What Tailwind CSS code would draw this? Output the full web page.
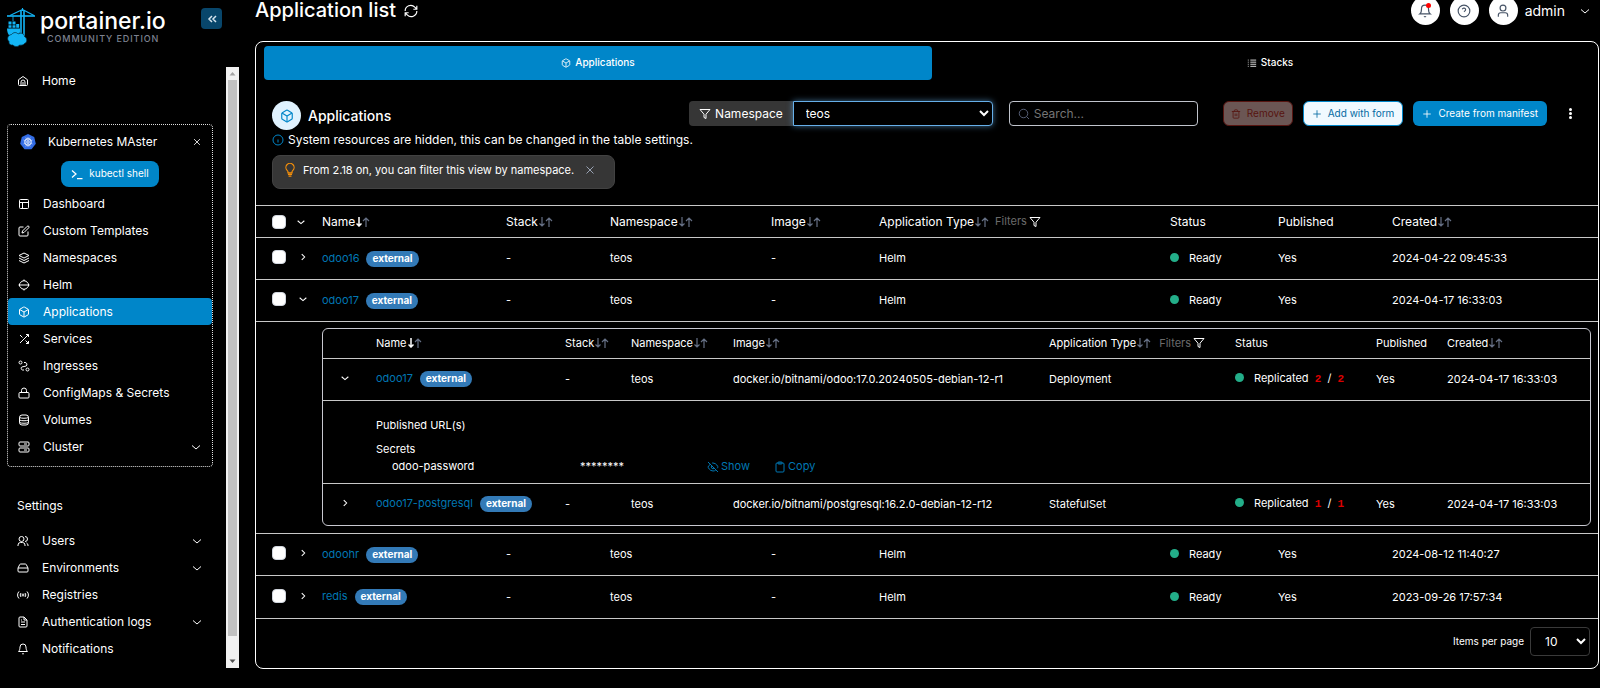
<!DOCTYPE html>
<html lang="en">
<head>
<meta charset="utf-8">
<title>Application list</title>
<script src="https://cdn.jsdelivr.net/npm/@tailwindcss/browser@4"></script>
</head>
<body class="bg-black text-white font-['Inter',sans-serif] text-xs overflow-x-hidden">

<svg class="hidden" xmlns="http://www.w3.org/2000/svg">
  <defs>
    <symbol id="home" viewBox="0 0 24 24"><path d="M8 21v-7a4 4 0 0 1 8 0v7M12 14v7"/><path d="M3 9.5 12 3l9 6.500V19a2 2 0 0 1-2 2H5a2 2 0 0 1-2-2z"/></symbol>
    <symbol id="layout" viewBox="0 0 24 24"><rect x="3" y="3" width="18" height="18" rx="2"/><path d="M3 9h18M9 21V9"/></symbol>
    <symbol id="edit" viewBox="0 0 24 24"><path d="M11 4H4a2 2 0 0 0-2 2v14a2 2 0 0 0 2 2h14a2 2 0 0 0 2-2v-7"/><path d="M18.500 2.500a2.120 2.120 0 0 1 3 3L12 15l-4 1 1-4z"/></symbol>
    <symbol id="layers" viewBox="0 0 24 24"><path d="m12 2 10 5-10 5L2 7z"/><path d="m2 12 10 5 10-5M2 17l10 5 10-5"/></symbol>
    <symbol id="helm" viewBox="0 0 24 24"><path d="M4 9a8.500 8.500 0 0 1 16 0M4 15a8.500 8.500 0 0 0 16 0M1 12h22M12 4V1M12 23v-3M3 9v6M21 9v6"/></symbol>
    <symbol id="box" viewBox="0 0 24 24"><path d="M21 8a2 2 0 0 0-1-1.730l-7-4a2 2 0 0 0-2 0l-7 4A2 2 0 0 0 3 8v8a2 2 0 0 0 1 1.730l7 4a2 2 0 0 0 2 0l7-4A2 2 0 0 0 21 16Z"/><path d="m3.300 7 8.700 5 8.700-5M12 22V12"/></symbol>
    <symbol id="shuffle" viewBox="0 0 24 24"><path d="M16 3h5v5M4 20 21 3M21 16v5h-5M15 15l6 6M4 4l5 5"/></symbol>
    <symbol id="route" viewBox="0 0 24 24"><circle cx="5" cy="5" r="3"/><circle cx="19" cy="19" r="3"/><path d="M12 5h2a4 4 0 0 1 2.500 7l-9 2A3.500 3.500 0 0 0 9 20h3"/></symbol>
    <symbol id="lock" viewBox="0 0 24 24"><rect x="2" y="11" width="20" height="11" rx="2"/><path d="M7 11V7a5 5 0 0 1 10 0v4"/></symbol>
    <symbol id="database" viewBox="0 0 24 24"><rect x="3" y="2" width="18" height="20" rx="5"/><path d="M3 7c3 2 15 2 18 0M3 12c3 2 15 2 18 0M3 17c3 2 15 2 18 0"/></symbol>
    <symbol id="server" viewBox="0 0 24 24"><rect x="2" y="2" width="20" height="8" rx="2"/><rect x="2" y="14" width="20" height="8" rx="2"/><path d="M6 6h.01M6 18h.01M12 6h6M12 18h6"/></symbol>
    <symbol id="users" viewBox="0 0 24 24"><circle cx="9" cy="8" r="5"/><path d="M2 22v-2a5 5 0 0 1 5-5h4a5 5 0 0 1 5 5v2M16 3a5 5 0 0 1 0 10M19 16a5 5 0 0 1 3 4v2"/></symbol>
    <symbol id="drive" viewBox="0 0 24 24"><path d="M22 12H2M5.450 5.110 2 12v6a2 2 0 0 0 2 2h16a2 2 0 0 0 2-2v-6l-3.450-6.890A2 2 0 0 0 16.760 4H7.240a2 2 0 0 0-1.790 1.110zM6 16h.01M10 16h.01"/></symbol>
    <symbol id="radio" viewBox="0 0 24 24"><path d="M4 19a10 10 0 0 1 0-14M8 16a6 6 0 0 1 0-8M16 8a6 6 0 0 1 0 8M20 5a10 10 0 0 1 0 14"/><circle cx="12" cy="12" r="2"/></symbol>
    <symbol id="file" viewBox="0 0 24 24"><path d="M14 2H6a2 2 0 0 0-2 2v16a2 2 0 0 0 2 2h12a2 2 0 0 0 2-2V8z"/><path d="M14 2v6h6M8 12h8M8 17h8M8 8h2"/></symbol>
    <symbol id="bell" viewBox="0 0 24 24"><path d="M6 8a6 6 0 0 1 12 0c0 7 3 9 3 9H3s3-2 3-9M10.300 21a2 2 0 0 0 3.400 0"/></symbol>
    <symbol id="down" viewBox="0 0 24 24"><path d="m4 9 8 7 8-7"/></symbol>
    <symbol id="right" viewBox="0 0 24 24"><path d="m9 19 7-7-7-7"/></symbol>
    <symbol id="x" viewBox="0 0 24 24"><path d="M19 5 5 19M5 5l14 14"/></symbol>
    <symbol id="prompt" viewBox="0 0 24 24"><path d="m2 19 8-7-8-7M12 21h11"/></symbol>
    <symbol id="collapse" viewBox="0 0 24 24"><path d="m12 18-6-6 6-6M20 18l-6-6 6-6"/></symbol>
    <symbol id="refresh" viewBox="0 0 24 24"><path d="M2 12a9.500 9.500 0 0 1 16.500-6.500L22 9M22 3v6h-6M22 12a9.500 9.500 0 0 1-16.500 6.500L2 15M2 21v-6h6"/></symbol>
    <symbol id="help" viewBox="0 0 24 24"><circle cx="12" cy="12" r="10"/><path d="M9 9a3 3 0 0 1 5.830 1c0 2-3 3-3 3M12 17h.01"/></symbol>
    <symbol id="user" viewBox="0 0 24 24"><circle cx="12" cy="7" r="5"/><path d="M4 22v-3a4 4 0 0 1 4-4h8a4 4 0 0 1 4 4v3"/></symbol>
    <symbol id="list" viewBox="0 0 24 24"><path d="M8 5h14M8 10h14M8 15h14M8 20h14M2 5h2M2 10h2M2 15h2M2 20h2"/></symbol>
    <symbol id="filter" viewBox="0 0 24 24"><path d="M22 3H2l8 9.460V19l4 2v-8.540z"/></symbol>
    <symbol id="search" viewBox="0 0 24 24"><circle cx="11" cy="11" r="8.500"/><path d="m22 22-4.800-4.800"/></symbol>
    <symbol id="trash" viewBox="0 0 24 24"><path d="M2 6h20M19 6v14a2 2 0 0 1-2 2H7a2 2 0 0 1-2-2V6M8 6V4a2 2 0 0 1 2-2h4a2 2 0 0 1 2 2v2M10 11v6M14 11v6"/></symbol>
    <symbol id="plus" viewBox="0 0 24 24"><path d="M12 3v18M3 12h18"/></symbol>
    <symbol id="info" viewBox="0 0 24 24"><circle cx="12" cy="12" r="10"/><path d="M12 17v-6M12 7h.01"/></symbol>
    <symbol id="bulb" viewBox="0 0 24 24"><path d="M8.500 17v-2c0-1-.5-1.500-1.500-2.500a7 7 0 1 1 10 0c-1 1-1.500 1.500-1.500 2.500v2zM8.500 19.500h7M9.500 22.500h5"/></symbol>
    <symbol id="eyeoff" viewBox="0 0 24 24"><path d="M9.900 4.240A9.120 9.120 0 0 1 12 4c7 0 10 8 10 8a13 13 0 0 1-1.670 2.680M6.600 6.600A13.500 13.500 0 0 0 2 12s3 8 10 8a9.700 9.700 0 0 0 5.400-1.600M9.500 9.500a3.500 3.500 0 0 0 5 5M2 2l20 20"/></symbol>
    <symbol id="clipboard" viewBox="0 0 24 24"><rect x="4" y="4" width="16" height="18" rx="2"/><rect x="8" y="2" width="8" height="4" rx="1"/></symbol>
    <symbol id="sort" viewBox="0 0 14 10"><path d="M3 0v9M.5 6.500 3 9l2.500-2.500M10 10V1M7 4l3-3 3 3" stroke-width="1.200"/></symbol>
    <symbol id="sortactive" viewBox="0 0 14 10"><path d="M10 10V1M7 4l3-3 3 3" stroke="#667085" stroke-width="1.200"/><path d="M3 0v9M.5 6.500 3 9l2.500-2.500" stroke="#fff" stroke-width="1.500"/></symbol>
  </defs>
</svg>

<div class="flex min-h-screen items-start">

  <!-- Sidebar -->
  <aside class="w-60 shrink-0 pl-[7px]">
    <div class="flex h-[67px] items-start pt-2">
      <svg class="w-7 h-10 shrink-0" viewBox="0 0 28 40" fill="none" stroke="#13b5f5">
        <path d="M0 8h28" stroke-width="1.600"/>
        <path d="M15.500 0v3M15.500 1.500 3 7.500M15.500 1.500 27 7.500" stroke-width="1.100"/>
        <path d="M14 2v26M17 2v26" stroke-width="1.600"/>
        <path d="M6 8v5" stroke-width="0.800"/>
        <path d="M1.500 13.500h3v3h-3zM5.500 13.500h3v3h-3zM1.500 17.200h3v2.500h-3zM5.500 17.200h3v2.500h-3zM9.200 16h3v3.700h-3z" fill="#13b5f5" stroke="none"/>
        <path d="M0 20.500h13v3c0 2-1 3-2 5H3c-2-2-3-5-3-8z" fill="#13b5f5" stroke="none"/>
        <path d="M4.500 26.500c2-2.500 5-2.500 6.500-.5 3-2 6.500 0 6.500 2.500 3 1.500 3 6 0 7-1 1.500-3 2-5 1.500-1 2-5 2-6.500 0-2.500.5-4.500-1-4-3.500-2.500-2-1.500-6.500 2.500-7z" fill="#13b5f5" stroke="#04293a" stroke-width="0.700"/>
      </svg>
      <div class="ml-[5px] flex-1">
        <div class="text-[23px] leading-[26px] font-medium">portainer.io</div>
        <div class="pl-[7px] pt-px text-[9px] leading-[8px] font-medium tracking-widest text-[#7d8290]">COMMUNITY EDITION</div>
      </div>
      <button aria-label="Collapse sidebar" class="mr-[18px] flex size-[21px] items-center justify-center rounded bg-[#08466b]">
        <svg class="size-3" fill="none" stroke="#d5e4ee" stroke-width="3"><use href="#collapse"/></svg>
      </button>
    </div>

    <div class="flex items-stretch">
      <nav class="w-[206px] mr-[13px]">
        <a href="#" class="flex h-[27px] items-center gap-[13px] px-2.5"><svg class="size-3" fill="none" stroke="currentColor" stroke-width="2"><use href="#home"/></svg>Home</a>

        <div class="mt-[30px] rounded border border-dotted border-[#e0e0e0] pt-[3px] pb-1.5">
          <div class="flex h-[27px] items-center pl-3 pr-2.5">
            <svg class="size-4" viewBox="0 0 16 16" fill="none" stroke="#fff">
              <path d="M8 0l6.200 3 1.600 6.800-4.300 5.400H4.500L.2 9.800 1.800 3z" fill="#326ce5" stroke="none"/>
              <circle cx="8" cy="8" r="3.300" stroke-width="0.900"/>
              <path d="M8 3v10M3.500 6l9 4M12.500 6l-9 4M5.800 12.500l4.400-9M10.200 12.500l-4.400-9" stroke-width="0.500"/>
              <circle cx="8" cy="8" r="1" fill="#326ce5" stroke-width="0.500"/>
            </svg>
            <span class="ml-3 flex-1">Kubernetes MAster</span>
            <button aria-label="Close environment"><svg class="size-2.5" fill="none" stroke="currentColor" stroke-width="2"><use href="#x"/></svg></button>
          </div>
          <button class="mx-auto mt-1.5 mb-[3px] flex h-[26px] items-center gap-1.5 rounded-lg bg-[#0086c9] px-2.5 text-[10px]"><svg class="size-3" fill="none" stroke="currentColor" stroke-width="2.500"><use href="#prompt"/></svg>kubectl shell</button>
          <a href="#" class="flex h-[27px] items-center gap-[13px] px-2.5"><svg class="size-3" fill="none" stroke="currentColor" stroke-width="2"><use href="#layout"/></svg>Dashboard</a>
          <a href="#" class="flex h-[27px] items-center gap-[13px] px-2.5"><svg class="size-3" fill="none" stroke="currentColor" stroke-width="2"><use href="#edit"/></svg>Custom Templates</a>
          <a href="#" class="flex h-[27px] items-center gap-[13px] px-2.5"><svg class="size-3" fill="none" stroke="currentColor" stroke-width="2"><use href="#layers"/></svg>Namespaces</a>
          <a href="#" class="flex h-[27px] items-center gap-[13px] px-2.5"><svg class="size-3" fill="none" stroke="currentColor" stroke-width="2"><use href="#helm"/></svg>Helm</a>
          <a href="#" class="flex h-[27px] items-center gap-[13px] rounded bg-[#0086c9] px-2.5"><svg class="size-3" fill="none" stroke="currentColor" stroke-width="2"><use href="#box"/></svg>Applications</a>
          <a href="#" class="flex h-[27px] items-center gap-[13px] px-2.5"><svg class="size-3" fill="none" stroke="currentColor" stroke-width="2"><use href="#shuffle"/></svg>Services</a>
          <a href="#" class="flex h-[27px] items-center gap-[13px] px-2.5"><svg class="size-3" fill="none" stroke="currentColor" stroke-width="2"><use href="#route"/></svg>Ingresses</a>
          <a href="#" class="flex h-[27px] items-center gap-[13px] px-2.5"><svg class="size-3" fill="none" stroke="currentColor" stroke-width="2"><use href="#lock"/></svg>ConfigMaps &amp; Secrets</a>
          <a href="#" class="flex h-[27px] items-center gap-[13px] px-2.5"><svg class="size-3" fill="none" stroke="currentColor" stroke-width="2"><use href="#database"/></svg>Volumes</a>
          <a href="#" class="flex h-[27px] items-center gap-[13px] px-2.5"><svg class="size-3" fill="none" stroke="currentColor" stroke-width="2"><use href="#server"/></svg><span class="flex-1">Cluster</span><svg class="size-3" fill="none" stroke="currentColor" stroke-width="2"><use href="#down"/></svg></a>
        </div>

        <div class="mt-[25px] mb-2 flex h-[27px] items-center px-2.5">Settings</div>
        <a href="#" class="flex h-[27px] items-center gap-[13px] px-2.5"><svg class="size-3" fill="none" stroke="currentColor" stroke-width="2"><use href="#users"/></svg><span class="flex-1">Users</span><svg class="size-3" fill="none" stroke="currentColor" stroke-width="2"><use href="#down"/></svg></a>
        <a href="#" class="flex h-[27px] items-center gap-[13px] px-2.5"><svg class="size-3" fill="none" stroke="currentColor" stroke-width="2"><use href="#drive"/></svg><span class="flex-1">Environments</span><svg class="size-3" fill="none" stroke="currentColor" stroke-width="2"><use href="#down"/></svg></a>
        <a href="#" class="flex h-[27px] items-center gap-[13px] px-2.5"><svg class="size-3" fill="none" stroke="currentColor" stroke-width="2"><use href="#radio"/></svg>Registries</a>
        <a href="#" class="flex h-[27px] items-center gap-[13px] px-2.5"><svg class="size-3" fill="none" stroke="currentColor" stroke-width="2"><use href="#file"/></svg><span class="flex-1">Authentication logs</span><svg class="size-3" fill="none" stroke="currentColor" stroke-width="2"><use href="#down"/></svg></a>
        <a href="#" class="mb-1.5 flex h-[27px] items-center gap-[13px] px-2.5"><svg class="size-3" fill="none" stroke="currentColor" stroke-width="2"><use href="#bell"/></svg>Notifications</a>
      </nav>
      <div class="flex w-[13px] flex-col items-center bg-[#f1f1f1]" aria-hidden="true">
        <svg class="h-[13px] w-[13px]" viewBox="0 0 13 13"><path d="M3.500 8.500 6.500 5l3 3.500z" fill="#a3a3a3"/></svg>
        <div class="w-[9px] flex-1 bg-[#c1c1c1]"></div>
        <div class="h-[19px]"></div>
        <svg class="h-[13px] w-[13px]" viewBox="0 0 13 13"><path d="M3.500 4.500 6.500 8l3-3.500z" fill="#505050"/></svg>
      </div>
    </div>
  </aside>

  <!-- Main -->
  <main class="min-w-0 flex-1 pl-[15px] pr-px">
    <header class="-mt-1 mb-4 flex h-[29px] items-center">
      <h1 class="pb-0.5 text-xl font-medium">Application list</h1>
      <button aria-label="Refresh" class="ml-2"><svg class="size-3.5" fill="none" stroke="currentColor" stroke-width="2"><use href="#refresh"/></svg></button>
      <div class="ml-auto flex items-center gap-2.5 pr-2">
        <button aria-label="Notifications" class="relative flex size-[29px] items-center justify-center rounded-full bg-white text-[#475467]"><svg class="size-3.5" fill="none" stroke="currentColor" stroke-width="2"><use href="#bell"/></svg><span class="absolute top-[7px] right-[9px] size-[5px] rounded-full bg-[#ff0000]"></span></button>
        <button aria-label="Help" class="flex size-[29px] items-center justify-center rounded-full bg-white text-[#475467]"><svg class="size-3.5" fill="none" stroke="currentColor" stroke-width="2"><use href="#help"/></svg></button>
        <button class="flex items-center"><span class="flex size-[29px] items-center justify-center rounded-full bg-white text-[#475467]"><svg class="size-3.5" fill="none" stroke="currentColor" stroke-width="2"><use href="#user"/></svg></span><span class="ml-[7px] text-sm">admin</span><svg class="ml-3.5 size-3" fill="none" stroke="currentColor" stroke-width="2"><use href="#down"/></svg></button>
      </div>
    </header>

    <section class="rounded-lg border border-white pb-3">
      <div class="-mr-1.5 flex gap-1 pl-2 pt-1 text-[10px] font-medium">
        <a href="#" class="flex h-[34px] flex-1 items-center justify-center gap-1 rounded bg-[#0086c9]"><svg class="size-2.5" fill="none" stroke="currentColor" stroke-width="2"><use href="#box"/></svg>Applications</a>
        <a href="#" class="flex h-[34px] flex-1 items-center justify-center gap-1 rounded"><svg class="size-2.5" fill="none" stroke="currentColor" stroke-width="2"><use href="#list"/></svg>Stacks</a>
      </div>

      <div class="mt-[21px] flex items-start pl-4">
        <div class="flex items-center gap-[7px]">
          <span class="flex size-[29px] items-center justify-center rounded-full bg-[#e0f2fe] text-[#0086c9]"><svg class="size-3.5" fill="none" stroke="currentColor" stroke-width="2"><use href="#box"/></svg></span>
          <h2 class="text-sm font-medium">Applications</h2>
        </div>
        <div class="ml-auto flex h-[25px]">
          <label for="ns" class="flex items-center gap-1 rounded-l bg-[#363636] px-2.5"><svg class="size-3" fill="none" stroke="currentColor" stroke-width="2"><use href="#filter"/></svg>Namespace</label>
          <select id="ns" class="w-[200px] rounded-r border border-[#66afe9] bg-black pl-2 shadow-[0_0_6px_#66afe999]"><option>teos</option></select>
        </div>
        <div class="ml-4 flex h-[25px] w-[189px] items-center gap-1 rounded border border-[#c0c4cc] pl-2">
          <svg class="size-3 shrink-0" fill="none" stroke="#565f76" stroke-width="2"><use href="#search"/></svg>
          <input type="text" aria-label="Search" placeholder="Search..." class="w-full bg-transparent placeholder:text-[#757575]">
        </div>
        <button disabled class="ml-[25px] flex h-[25px] items-center gap-1.5 rounded-md border border-[#571410] bg-[#6b5654] px-[7px] text-[10px] text-[#571410]"><svg class="size-2.5" fill="none" stroke="currentColor" stroke-width="2"><use href="#trash"/></svg>Remove</button>
        <button class="ml-2.5 flex h-[25px] items-center gap-1.5 rounded-md border border-[#0086c9] bg-[#f0f9ff] px-2 text-[10px] text-[#026aa2]"><svg class="size-2.5" fill="none" stroke="currentColor" stroke-width="2"><use href="#plus"/></svg>Add with form</button>
        <button class="ml-2.5 flex h-[25px] items-center gap-1.5 rounded-md bg-[#0086c9] px-[9px] text-[10px]"><svg class="size-2.5" fill="none" stroke="currentColor" stroke-width="2"><use href="#plus"/></svg>Create from manifest</button>
        <button aria-label="Table settings" class="ml-[17px] mr-[22px] flex h-[25px] w-3 flex-col items-center justify-center gap-px"><span class="size-[3px] rounded-full bg-white"></span><span class="size-[3px] rounded-full bg-white"></span><span class="size-[3px] rounded-full bg-white"></span></button>
      </div>

      <p class="flex h-5 items-center gap-1 pl-4"><svg class="size-3" fill="none" stroke="#0086c9" stroke-width="2"><use href="#info"/></svg>System resources are hidden, this can be changed in the table settings.</p>
      <div class="mt-[5px] ml-4 flex h-[34px] w-fit items-center rounded-lg border border-[#424242] bg-[#363636] pl-2.5 pr-[18px] pb-1 text-[11px]">
        <svg class="size-3.5" fill="none" stroke="#f79009" stroke-width="2"><use href="#bulb"/></svg>
        <span class="ml-1.5">From 2.18 on, you can filter this view by namespace.</span>
        <button aria-label="Dismiss" class="ml-2.5"><svg class="size-3" fill="none" stroke="#98a2b3" stroke-width="2"><use href="#x"/></svg></button>
      </div>

      <table class="mt-4 w-full table-fixed border-collapse border-y border-[#c8c8c8] text-left text-[11px]">
        <colgroup><col class="w-[66px]"><col class="w-[184px]"><col class="w-[104px]"><col class="w-[161px]"><col class="w-[108px]"><col class="w-[291px]"><col class="w-[108px]"><col class="w-[114px]"><col class="w-[206px]"></colgroup>
        <thead>
          <tr class="h-8 text-xs [&>th]:font-normal">
            <th><div class="flex items-center pl-4"><input type="checkbox" aria-label="Select all" class="size-3.5 appearance-none rounded border border-[#d0d5dd] bg-white"><button aria-label="Expand all" class="ml-2.5"><svg class="size-2.5" fill="none" stroke="currentColor" stroke-width="2.500"><use href="#down"/></svg></button></div></th>
            <th><button class="flex items-center gap-px">Name<svg class="h-2.5 w-3.5" fill="none"><use href="#sortactive"/></svg></button></th>
            <th><button class="flex items-center gap-px">Stack<svg class="h-2.5 w-3.5" fill="none" stroke="#667085"><use href="#sort"/></svg></button></th>
            <th><button class="flex items-center gap-px">Namespace<svg class="h-2.5 w-3.5" fill="none" stroke="#667085"><use href="#sort"/></svg></button></th>
            <th><button class="flex items-center gap-px">Image<svg class="h-2.5 w-3.5" fill="none" stroke="#667085"><use href="#sort"/></svg></button></th>
            <th><div class="flex items-center gap-1.5"><button class="flex items-center gap-px">Application Type<svg class="h-2.5 w-3.5" fill="none" stroke="#667085"><use href="#sort"/></svg></button><button class="flex items-center gap-0.5 text-[11px] text-[#6b6b6b]">Filters<svg class="size-3" fill="none" stroke="#fff" stroke-width="2"><use href="#filter"/></svg></button></div></th>
            <th>Status</th>
            <th>Published</th>
            <th><button class="flex items-center gap-px">Created<svg class="h-2.5 w-3.5" fill="none" stroke="#667085"><use href="#sort"/></svg></button></th>
          </tr>
        </thead>
        <tbody>
          <tr class="h-[42px] border-t border-[#c8c8c8]">
            <td><div class="flex items-center pb-[3px] pl-4"><input type="checkbox" aria-label="Select odoo16" class="size-3.5 appearance-none rounded border border-[#d0d5dd] bg-white"><button aria-label="Expand odoo16" class="ml-3"><svg class="size-2.5" fill="none" stroke="currentColor" stroke-width="2.500"><use href="#right"/></svg></button></div></td>
            <td><a href="#" class="text-[#0077b3]">odoo16</a><span class="ml-[7px] inline-block h-4 rounded-full bg-[#337ab7] px-1.5 text-[10px] leading-[15px] font-bold">external</span></td>
            <td>-</td><td>teos</td><td>-</td><td>Helm</td>
            <td><span class="mr-2.5 inline-block size-[9px] rounded-full bg-[#23ae89]"></span>Ready</td>
            <td>Yes</td><td>2024-04-22 09:45:33</td>
          </tr>
          <tr class="h-[42px] border-t border-[#c8c8c8]">
            <td><div class="flex items-center pb-[3px] pl-4"><input type="checkbox" aria-label="Select odoo17" class="size-3.5 appearance-none rounded border border-[#d0d5dd] bg-white"><button aria-label="Collapse odoo17" class="ml-3"><svg class="size-2.5" fill="none" stroke="currentColor" stroke-width="2.500"><use href="#down"/></svg></button></div></td>
            <td><a href="#" class="text-[#0077b3]">odoo17</a><span class="ml-[7px] inline-block h-4 rounded-full bg-[#337ab7] px-1.5 text-[10px] leading-[15px] font-bold">external</span></td>
            <td>-</td><td>teos</td><td>-</td><td>Helm</td>
            <td><span class="mr-2.5 inline-block size-[9px] rounded-full bg-[#23ae89]"></span>Ready</td>
            <td>Yes</td><td>2024-04-17 16:33:03</td>
          </tr>
          <tr class="border-t border-[#c8c8c8]">
            <td></td>
            <td colspan="8" class="pt-1.5 pb-[7px] pr-[7px]">
              <div class="rounded-md border border-[#c8c8d0]">
                <table class="w-full table-fixed border-collapse text-left">
                  <colgroup><col class="w-[53px]"><col class="w-[189px]"><col class="w-[66px]"><col class="w-[102px]"><col class="w-[316px]"><col class="w-[186px]"><col class="w-[141px]"><col class="w-[71px]"><col class="w-[144px]"></colgroup>
                  <thead>
                    <tr class="h-[29px] [&>th]:font-normal">
                      <th></th>
                      <th><button class="flex items-center gap-px">Name<svg class="h-2.5 w-3.5" fill="none"><use href="#sortactive"/></svg></button></th>
                      <th><button class="flex items-center gap-px">Stack<svg class="h-2.5 w-3.5" fill="none" stroke="#667085"><use href="#sort"/></svg></button></th>
                      <th><button class="flex items-center gap-px">Namespace<svg class="h-2.5 w-3.5" fill="none" stroke="#667085"><use href="#sort"/></svg></button></th>
                      <th><button class="flex items-center gap-px">Image<svg class="h-2.5 w-3.5" fill="none" stroke="#667085"><use href="#sort"/></svg></button></th>
                      <th><div class="flex items-center gap-2"><button class="flex items-center gap-px">Application Type<svg class="h-2.5 w-3.5" fill="none" stroke="#667085"><use href="#sort"/></svg></button><button class="flex items-center gap-0.5 font-normal text-[#6b6b6b]">Filters<svg class="size-3" fill="none" stroke="#fff" stroke-width="2"><use href="#filter"/></svg></button></div></th>
                      <th>Status</th>
                      <th>Published</th>
                      <th><button class="flex items-center gap-px">Created<svg class="h-2.5 w-3.5" fill="none" stroke="#667085"><use href="#sort"/></svg></button></th>
                    </tr>
                  </thead>
                  <tbody>
                    <tr class="h-[42px] border-t border-[#c8c8c8]">
                      <td><button aria-label="Collapse odoo17 deployment" class="mb-[3px] ml-[17px] block"><svg class="size-2.5" fill="none" stroke="currentColor" stroke-width="2.500"><use href="#down"/></svg></button></td>
                      <td><a href="#" class="text-[#0077b3]">odoo17</a><span class="ml-[7px] inline-block h-4 rounded-full bg-[#337ab7] px-1.5 text-[10px] leading-[15px] font-bold">external</span></td>
                      <td>-</td><td>teos</td><td>docker.io/bitnami/odoo:17.0.20240505-debian-12-r1</td><td>Deployment</td>
                      <td><span class="mr-2.5 inline-block size-[9px] rounded-full bg-[#23ae89]"></span>Replicated <code class="ml-[3px] font-['Liberation_Mono',monospace] font-bold text-[#d90000]">2</code> <span class="mx-[3px]">/</span> <code class="font-['Liberation_Mono',monospace] font-bold text-[#d90000]">2</code></td>
                      <td>Yes</td><td>2024-04-17 16:33:03</td>
                    </tr>
                    <tr class="border-t border-[#c8c8c8]">
                      <td></td>
                      <td colspan="8" class="h-[83px] pt-2.5">
                        <div class="mb-2 leading-4">Published URL(s)</div>
                        <div class="leading-4">Secrets</div>
                        <div class="flex h-5 items-center pl-4">
                          <span class="w-[188px]">odoo-password</span>
                          <span class="w-[127px]">********</span>
                          <button class="flex w-[67px] items-center gap-0.5 text-[#0077b3]"><svg class="size-3" fill="none" stroke="currentColor" stroke-width="2"><use href="#eyeoff"/></svg>Show</button>
                          <button class="flex items-center gap-0.5 text-[#0077b3]"><svg class="size-3" fill="none" stroke="currentColor" stroke-width="2"><use href="#clipboard"/></svg>Copy</button>
                        </div>
                      </td>
                    </tr>
                    <tr class="h-[42px] border-t border-[#c8c8c8]">
                      <td><button aria-label="Expand odoo17-postgresql" class="mb-[3px] ml-[17px] block"><svg class="size-2.5" fill="none" stroke="currentColor" stroke-width="2.500"><use href="#right"/></svg></button></td>
                      <td><a href="#" class="text-[#0077b3]">odoo17-postgresql</a><span class="ml-[7px] inline-block h-4 rounded-full bg-[#337ab7] px-1.5 text-[10px] leading-[15px] font-bold">external</span></td>
                      <td>-</td><td>teos</td><td>docker.io/bitnami/postgresql:16.2.0-debian-12-r12</td><td>StatefulSet</td>
                      <td><span class="mr-2.5 inline-block size-[9px] rounded-full bg-[#23ae89]"></span>Replicated <code class="ml-[3px] font-['Liberation_Mono',monospace] font-bold text-[#d90000]">1</code> <span class="mx-[3px]">/</span> <code class="font-['Liberation_Mono',monospace] font-bold text-[#d90000]">1</code></td>
                      <td>Yes</td><td>2024-04-17 16:33:03</td>
                    </tr>
                  </tbody>
                </table>
              </div>
            </td>
          </tr>
          <tr class="h-[42px] border-t border-[#c8c8c8]">
            <td><div class="flex items-center pb-[3px] pl-4"><input type="checkbox" aria-label="Select odoohr" class="size-3.5 appearance-none rounded border border-[#d0d5dd] bg-white"><button aria-label="Expand odoohr" class="ml-3"><svg class="size-2.5" fill="none" stroke="currentColor" stroke-width="2.500"><use href="#right"/></svg></button></div></td>
            <td><a href="#" class="text-[#0077b3]">odoohr</a><span class="ml-[7px] inline-block h-4 rounded-full bg-[#337ab7] px-1.5 text-[10px] leading-[15px] font-bold">external</span></td>
            <td>-</td><td>teos</td><td>-</td><td>Helm</td>
            <td><span class="mr-2.5 inline-block size-[9px] rounded-full bg-[#23ae89]"></span>Ready</td>
            <td>Yes</td><td>2024-08-12 11:40:27</td>
          </tr>
          <tr class="h-[43px] border-t border-[#c8c8c8]">
            <td><div class="flex items-center pb-[3px] pl-4"><input type="checkbox" aria-label="Select redis" class="size-3.5 appearance-none rounded border border-[#d0d5dd] bg-white"><button aria-label="Expand redis" class="ml-3"><svg class="size-2.5" fill="none" stroke="currentColor" stroke-width="2.500"><use href="#right"/></svg></button></div></td>
            <td><a href="#" class="text-[#0077b3]">redis</a><span class="ml-[7px] inline-block h-4 rounded-full bg-[#337ab7] px-1.5 text-[10px] leading-[15px] font-bold">external</span></td>
            <td>-</td><td>teos</td><td>-</td><td>Helm</td>
            <td><span class="mr-2.5 inline-block size-[9px] rounded-full bg-[#23ae89]"></span>Ready</td>
            <td>Yes</td><td>2023-09-26 17:57:34</td>
          </tr>
        </tbody>
      </table>

      <div class="mt-2 mr-2 flex items-center justify-end gap-1.5">
        <label for="pp" class="text-[10px]">Items per page</label>
        <select id="pp" class="h-[29px] w-[60px] rounded border border-[#3a3a3a] bg-black pl-2.5 text-xs"><option>10</option></select>
      </div>
    </section>
  </main>
</div>
</body>
</html>
